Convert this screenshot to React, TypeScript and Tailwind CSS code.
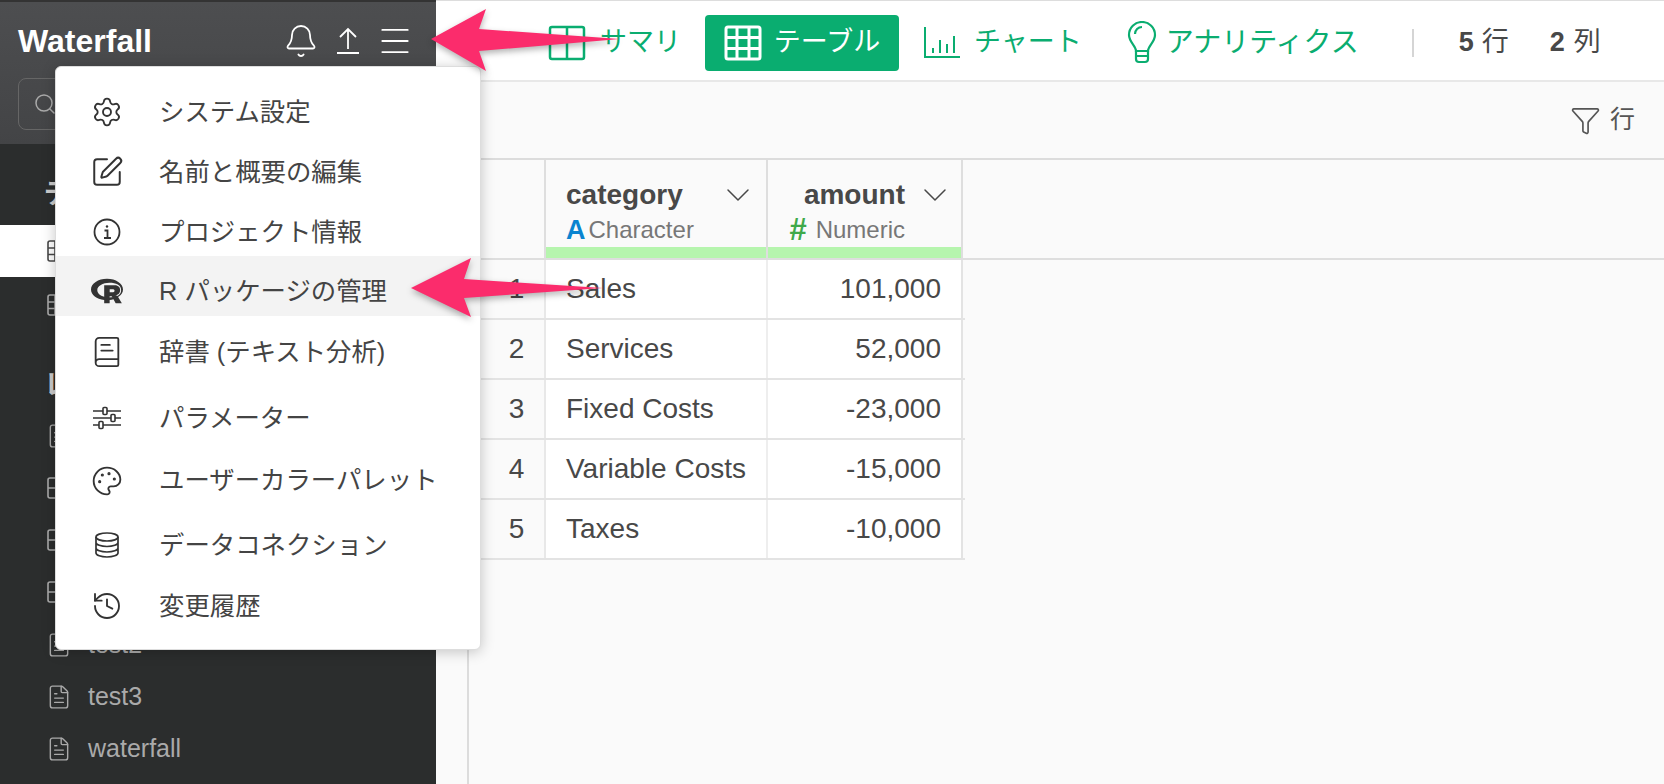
import { Bell, BookText, ChevronDown, FileText, Funnel, History, Menu, Palette, Search, Settings, SquarePen } from "lucide-react"
import { FaRProject } from "react-icons/fa"

const font = "font-['Liberation_Sans','Noto_Sans_CJK_JP',sans-serif]"

function InfoIcon() {
    return (
        <svg width="28" height="28" viewBox="0 0 28 28" fill="none" stroke="currentColor" strokeWidth="1.8">
            <circle cx="14" cy="14" r="12.5" />
            <circle cx="14" cy="8.5" r="1.2" fill="currentColor" stroke="none" />
            <path d="M11.5 12.5H14.5V19.5M11 20h7" />
        </svg>
    )
}

function SlidersIcon() {
    return (
        <svg width="28" height="24" viewBox="0 0 28 24" fill="none" stroke="currentColor" strokeWidth="1.6">
            <path d="M0 5h10M14 5h14M0 12h18M22 12h6M0 19h6M10 19h18" />
            <rect x="10" y="1.5" width="4" height="7" rx="1" />
            <rect x="18" y="8.5" width="4" height="7" rx="1" />
            <rect x="6" y="15.5" width="4" height="7" rx="1" />
        </svg>
    )
}

function DatabaseIcon() {
    return (
        <svg width="24" height="26" viewBox="0 0 24 26" fill="none" stroke="currentColor" strokeWidth="1.7">
            <ellipse cx="12" cy="5" rx="11" ry="4" />
            <path d="M1 5v16c0 2.2 5 4 11 4s11-1.800 11-4V5M1 10.500c0 2.200 5 4 11 4s11-1.800 11-4M1 16c0 2.200 5 4 11 4s11-1.800 11-4" />
        </svg>
    )
}

const menuItems = [
    { label: "システム設定", icon: <Settings className="w-[32px] h-[32px]" strokeWidth={1.4} />, h: "h-[60px]" },
    { label: "名前と概要の編集", icon: <SquarePen className="w-[34px] h-[34px]" strokeWidth={1.4} />, h: "h-[60px]" },
    { label: "プロジェクト情報", icon: <InfoIcon />, h: "h-[54px] pt-[6px]" },
    { label: "R パッケージの管理", icon: <FaRProject className="w-[32px] h-[32px]" />, h: "h-[60px] pt-[10px] bg-[#f3f3f3]" },
    { label: "辞書 (テキスト分析)", icon: <BookText className="w-[34px] h-[34px]" strokeWidth={1.3} />, h: "h-[68px] pt-[4px]" },
    { label: "パラメーター", icon: <SlidersIcon />, h: "h-[66px] pt-[2px]" },
    { label: "ユーザーカラーパレット", icon: <Palette className="w-[32px] h-[32px]" strokeWidth={1.4} />, h: "h-[61px]" },
    { label: "データコネクション", icon: <DatabaseIcon />, h: "h-[64px] pt-[4px]" },
    { label: "変更履歴", icon: <History className="w-[32px] h-[32px]" strokeWidth={1.4} />, h: "h-[62px]" },
]

const rows = [
    ["1", "Sales", "101,000"],
    ["2", "Services", "52,000"],
    ["3", "Fixed Costs", "-23,000"],
    ["4", "Variable Costs", "-15,000"],
    ["5", "Taxes", "-10,000"],
]

const sideFiles = [
    { name: "test", table: false, h: "h-[52px]" },
    { name: "sales", table: true, h: "h-[52px]" },
    { name: "budget", table: true, h: "h-[52px]" },
    { name: "costs", table: true, h: "h-[52px]" },
    { name: "test2", table: false, h: "h-[53px]" },
    { name: "test3", table: false, h: "h-[52px]" },
    { name: "waterfall", table: false, h: "h-[52px]" },
]

function DataFrameIcon() {
    return (
        <svg width="24" height="24" viewBox="0 0 24 24" fill="none" stroke="currentColor" strokeWidth="1.6">
            <rect x="2" y="2" width="20" height="20" rx="2" />
            <path d="M9 2v20M2 9h20M2 15.500h20" />
        </svg>
    )
}

function ReportTableIcon() {
    return (
        <svg width="24" height="24" viewBox="0 0 24 24" fill="none" stroke="currentColor" strokeWidth="1.6">
            <rect x="2" y="2" width="20" height="20" rx="2" />
            <path d="M12 2v20M2 12h20" />
        </svg>
    )
}

function SummaryIcon() {
    return (
        <svg width="38" height="38" viewBox="0 0 38 38" fill="none" stroke="currentColor" strokeWidth="2.5">
            <rect x="2" y="3" width="34" height="32" rx="2" />
            <path d="M19 3v32M2 15h34" />
        </svg>
    )
}

function TableIcon() {
    return (
        <svg width="38" height="38" viewBox="0 0 38 38" fill="none" stroke="currentColor" strokeWidth="3">
            <rect x="2" y="3" width="34" height="32" rx="2" />
            <path d="M13 3v32M25 3v32M2 13.500h34M2 24.500h34" />
        </svg>
    )
}

function ChartIcon() {
    return (
        <svg width="38" height="38" viewBox="0 0 38 38" fill="none" stroke="currentColor" strokeWidth="2">
            <path d="M2 3v30h35M10 24v5M17 16v13M24 20v9M31 12v17" />
        </svg>
    )
}

function BulbIcon() {
    return (
        <svg width="30" height="44" viewBox="0 0 30 44" fill="none" stroke="currentColor" strokeWidth="2.2">
            <path d="M9 30C9 25 2 21 2 14A13 13 0 0 1 28 14C28 21 21 25 21 30Z" />
            <path d="M9 30v8a3 3 0 0 0 3 3h6a3 3 0 0 0 3-3v-8M9 35h12" />
            <path d="M8 13a7 7 0 0 1 7-7" />
        </svg>
    )
}

function UploadIcon() {
    return (
        <svg width="26" height="28" viewBox="0 0 26 28" fill="none" stroke="currentColor" strokeWidth="1.8">
            <path d="M13 22V3M5 10l8-8 8 8M2 26h22" />
        </svg>
    )
}

export default function App() {
    return (
        <div className={`${font} relative flex w-[1664px] h-[784px] overflow-hidden bg-[#fafafa] text-[#484848]`}>
            {/* left sidebar */}
            <aside className="w-[436px] h-full shrink-0 bg-[#2b2d2d] flex flex-col">
                <div className="h-[144px] bg-linear-to-b from-[#4d4e50] to-[#434446] border-t-2 border-[#333] px-[18px]">
                    <div className="flex items-center h-[76px] pt-[1px]">
                        <span className="text-[32px] font-bold text-white">Waterfall</span>
                        <div className="ml-auto flex items-center text-white">
                            <div className="w-[47px] flex justify-center"><Bell className="w-[36px] h-[36px]" strokeWidth={1.2} /></div>
                            <div className="w-[47px] flex justify-center"><UploadIcon /></div>
                            <div className="w-[47px] flex justify-center"><Menu className="w-[38px] h-[38px]" strokeWidth={1.2} /></div>
                        </div>
                    </div>
                    <div className="h-[52px] w-[300px] rounded-lg border border-[#666] flex items-center px-[14px]">
                        <Search className="w-[24px] h-[24px] text-[#aaa]" strokeWidth={1.5} />
                    </div>
                </div>
                <div className="pl-[44px] h-[81px] pt-[20px] flex items-center text-[27px] font-bold text-[#ccc]">データフレーム</div>
                <div className="h-[52px] bg-white pl-[46px] flex items-center text-[#484848]">
                    <DataFrameIcon />
                    <span className="ml-[20px] text-[25px]">data</span>
                </div>
                <div className="h-[55px] pl-[46px] flex items-center text-[#aaa]">
                    <DataFrameIcon />
                    <span className="ml-[20px] text-[25px]">data2</span>
                </div>
                <div className="pl-[44px] h-[78px] pt-[28px] flex items-center text-[27px] font-bold text-[#ccc]">レポート</div>
                <div className="flex flex-col">
                    {sideFiles.map((f) => (
                        <div key={f.name} className={`${f.h} pl-[46px] flex items-center text-[#aaa]`}>
                            {f.table ? <ReportTableIcon /> : <FileText className="w-[26px] h-[28px]" strokeWidth={1.3} />}
                            <span className="ml-[16px] text-[25px]">{f.name}</span>
                        </div>
                    ))}
                </div>
            </aside>

            {/* main */}
            <main className="flex-1 flex flex-col">
                <div className="h-[82px] pt-[4px] bg-white border-t border-t-[#ddd] border-b-2 border-b-[#e8e8e8] flex items-center pl-[112px] text-[#0aad70] text-[27px]">
                    <SummaryIcon />
                    <span className="ml-[14px]">サマリ</span>
                    <div className="ml-[24px] w-[194px] h-[56px] rounded bg-[#0aad70] text-white flex items-center justify-center gap-[12px]">
                        <TableIcon />
                        <span>テーブル</span>
                    </div>
                    <div className="ml-[24px]"><ChartIcon /></div>
                    <span className="ml-[13px]">チャート</span>
                    <div className="ml-[45px]"><BulbIcon /></div>
                    <span className="ml-[9px] text-[28px]">アナリティクス</span>
                    <div className="ml-[53px] w-[2px] h-[28px] bg-[#d5d5d5]" />
                    <div className="ml-[45px] flex items-center text-[#484848]">
                        <b>5</b><span className="ml-[8px]">行</span>
                        <b className="ml-[41px]">2</b><span className="ml-[9px]">列</span>
                    </div>
                </div>
                <div className="h-[78px] border-b-2 border-[#dcdcdc] flex items-center justify-end pr-[29px] text-[#555]">
                    <Funnel className="w-[31px] h-[31px]" strokeWidth={1.3} />
                    <span className="ml-[9px] text-[25px]">行</span>
                </div>
                <div className="flex-1 pl-[31px]">
                    <div className="h-full border-l-2 border-[#dcdcdc]">
                        {/* table head */}
                        <div className="flex h-[100px] border-b-2 border-[#dedede]">
                            <div className="w-[77px] shrink-0 border-r-2 border-[#dedede]" />
                            <div className="w-[222px] shrink-0 border-r-2 border-[#dedede] flex flex-col">
                                <div className="flex-1 pl-[20px] pr-[8px] pt-[17px]">
                                    <div className="flex items-center h-[36px] text-[28px] font-bold">
                                        category
                                        <ChevronDown className="ml-auto w-[40px] h-[40px]" strokeWidth={0.9} />
                                    </div>
                                    <div className="flex items-center h-[34px] text-[24px] text-[#777]">
                                        <span className="text-[#0a84d0] font-bold text-[27px] mr-[3px]">A</span>Character
                                    </div>
                                </div>
                                <div className="h-[13px] bg-[#b6f5ae]" />
                            </div>
                            <div className="w-[195px] shrink-0 border-r-2 border-[#dedede] flex flex-col">
                                <div className="flex-1 pr-[6px] pt-[17px]">
                                    <div className="flex items-center justify-end h-[36px] text-[28px] font-bold">
                                        amount
                                        <ChevronDown className="ml-[10px] w-[40px] h-[40px]" strokeWidth={0.9} />
                                    </div>
                                    <div className="flex items-center justify-end pr-[50px] h-[34px] text-[24px] text-[#777]">
                                        <span className="text-[#3fa94a] font-bold text-[31px] mr-[9px]">#</span>Numeric
                                    </div>
                                </div>
                                <div className="h-[13px] bg-[#b6f5ae]" />
                            </div>
                        </div>
                        {/* table rows */}
                        {rows.map((r) => (
                            <div key={r[0]} className="flex w-[496px] h-[60px] border-b-2 border-[#e3e3e3] text-[28px]">
                                <div className="w-[77px] shrink-0 border-r-2 border-[#e8e8e8] pl-[20px] flex items-center justify-center">{r[0]}</div>
                                <div className="w-[222px] shrink-0 bg-white border-r-2 border-[#eee] pl-[20px] flex items-center">{r[1]}</div>
                                <div className="w-[195px] shrink-0 bg-white border-r-2 border-[#e3e3e3] pr-[20px] flex items-center justify-end">{r[2]}</div>
                            </div>
                        ))}
                    </div>
                </div>
            </main>

            {/* dropdown menu */}
            <div className="absolute left-[55px] top-[66px] w-[426px] h-[584px] bg-white rounded-md border border-[#ddd] shadow-[0_2px_14px_rgba(0,0,0,0.22)] py-[15px] text-[25.4px] text-[#444]">
                {menuItems.map((m) => (
                    <div key={m.label} className={`${m.h} flex items-center`}>
                        <div className="w-[103px] flex items-center justify-center pr-[2px] text-[#333]">{m.icon}</div>
                        <span>{m.label}</span>
                    </div>
                ))}
            </div>

            {/* annotation arrows */}
            <svg className="absolute left-0 top-0 drop-shadow-[0_3px_3px_rgba(0,0,0,0.3)]" width="1664" height="784" fill="#fb2c6c">
                <path d="M431 39 L486 9 L479 29 L620 39 L479 51 L486 71 Z" />
                <path d="M411 288 L471 258 L464 279 L603 288 L464 298 L471 317 Z" />
            </svg>
        </div>
    )
}
